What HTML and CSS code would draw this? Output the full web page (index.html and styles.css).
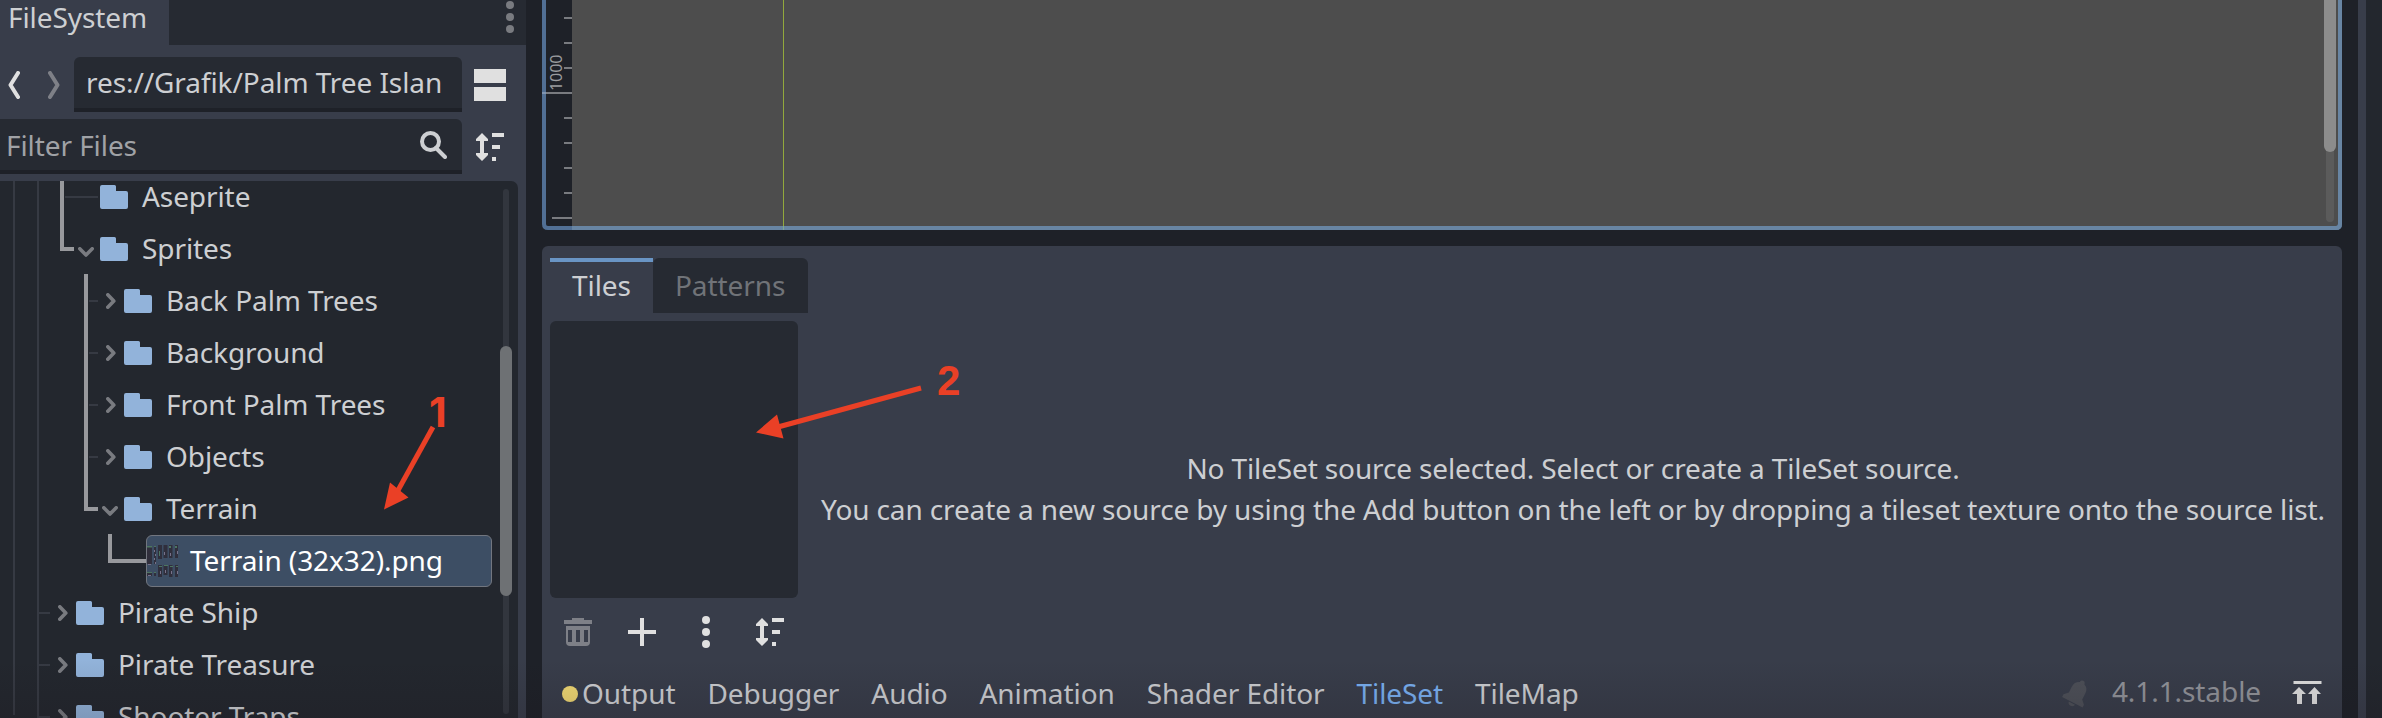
FILE: index.html
```html
<!DOCTYPE html>
<html lang="en">
<head>
<meta charset="utf-8">
<title>TileSet editor</title>
<link rel="stylesheet" href="styles.css">
</head>
<body>
<svg class="defs" width="0" height="0">
  <symbol id="folder" viewBox="0 0 28 24"><path d="M2 0H14.500Q16 0 16 1.500V6H26Q28 6 28 8V22Q28 24 26 24H2Q0 24 0 22V2Q0 0 2 0Z"/></symbol>
  <symbol id="right" viewBox="0 0 10 16"><path d="M1.800 1.800L7.800 8L1.800 14.200" fill="none" stroke="currentColor" stroke-width="3.600" stroke-linejoin="round" stroke-linecap="round"/></symbol>
  <symbol id="down" viewBox="0 0 16 10"><path d="M1.800 1.800L8 8L14.200 1.800" fill="none" stroke="currentColor" stroke-width="3.600" stroke-linejoin="round" stroke-linecap="round"/></symbol>
  <symbol id="sort" viewBox="0 0 28 28"><path d="M6 0L12 6V8H8V20H12V22L6 28L0 22V20H4V8H0V6ZM16 0H28V4H16ZM16 12H24V16H16ZM16 24H20V28H16Z"/></symbol>
  <symbol id="dots" viewBox="0 0 8 32"><circle cx="4" cy="4" r="4"/><circle cx="4" cy="16" r="4"/><circle cx="4" cy="28" r="4"/></symbol>
</svg>
<main class="editor">
  <aside class="dock">
    <header class="dock-tabs">
      <div class="dock-tab">FileSystem</div>
      <svg class="dock-menu" width="8" height="32"><use href="#dots"/></svg>
    </header>
    <div class="dock-row path-row">
      <svg class="nav" width="12" height="28" viewBox="0 0 12 28"><path d="M10 2L2.500 14L10 26"/></svg>
      <svg class="nav disabled" width="12" height="28" viewBox="0 0 12 28"><path d="M2 2L9.500 14L2 26"/></svg>
      <div class="field path">res://Grafik/Palm Tree Islan</div>
      <svg class="icon" width="32" height="32"><path d="M0 0H32V14H0ZM0 18H32V32H0Z"/></svg>
    </div>
    <div class="dock-row filter-row">
      <div class="field filter"><span>Filter Files</span>
        <svg width="27" height="28" viewBox="0 0 27 28"><g fill="none" stroke="#cdcfd2" stroke-width="4"><circle cx="10.500" cy="10.500" r="8.500"/><path d="M16 17L25 26" stroke-linecap="round"/></g></svg>
      </div>
      <svg class="icon" width="28" height="28"><use href="#sort"/></svg>
    </div>
    <section class="tree">
      <div class="rows">
        <div class="row l2"><i></i><svg class="folder"><use href="#folder"/></svg><span>Aseprite</span></div>
        <div class="row l2"><svg class="chev down"><use href="#down"/></svg><svg class="folder"><use href="#folder"/></svg><span>Sprites</span></div>
        <div class="row l3"><svg class="chev right"><use href="#right"/></svg><svg class="folder"><use href="#folder"/></svg><span>Back Palm Trees</span></div>
        <div class="row l3"><svg class="chev right"><use href="#right"/></svg><svg class="folder"><use href="#folder"/></svg><span>Background</span></div>
        <div class="row l3"><svg class="chev right"><use href="#right"/></svg><svg class="folder"><use href="#folder"/></svg><span>Front Palm Trees</span></div>
        <div class="row l3"><svg class="chev right"><use href="#right"/></svg><svg class="folder"><use href="#folder"/></svg><span>Objects</span></div>
        <div class="row l3"><svg class="chev down"><use href="#down"/></svg><svg class="folder"><use href="#folder"/></svg><span>Terrain</span></div>
        <div class="row selected">
          <svg class="thumb" width="31" height="32" viewBox="0 0 31 32">
            <path fill="#302f3c" d="M0 1h5v18H0zM7 1h2v18H7zM11 0h4v14h-4zM16.500 0h4v13h-4zM22 0h3.500v13H22zM28 0h3v13h-3zM0 27h5v4H0zM7 27h2v4H7zM11 20h4v12h-4zM16.500 20h4v10h-4zM22 20h3.500v12H22zM28 20h3v12h-3z"/>
            <path fill="#4d7560" d="M0 1h5v1.500H0zM7 1h2v1H7zM12 6h1v5h-1zM22 1h2v2h-2zM28 1h2v2h-2zM0 27h5v1H0zM7 27h2v1H7zM12 21h3v1h-3zM17 20h4v1h-4zM23 21h3v1h-3zM29 21h2v1h-2z"/>
            <path fill="#77718a" d="M1 19h3v1H1zM7 5h1v2H7zM8 9h1v2H8zM7 13h1v2H7zM8 17h1v2H8zM17 7h1v3h-1zM23 8h1v3h-1zM30 6h1v3h-1zM1 30h3v1H1zM13 26h1v3h-1zM18 25h1v3h-1zM24 26h1v3h-1zM30 26h1v3h-1z"/>
          </svg><span>Terrain (32x32).png</span></div>
        <div class="row l1"><svg class="chev right"><use href="#right"/></svg><svg class="folder"><use href="#folder"/></svg><span>Pirate Ship</span></div>
        <div class="row l1"><svg class="chev right"><use href="#right"/></svg><svg class="folder"><use href="#folder"/></svg><span>Pirate Treasure</span></div>
        <div class="row l1"><svg class="chev right"><use href="#right"/></svg><svg class="folder"><use href="#folder"/></svg><span>Shooter Traps</span></div>
      </div>
      <svg class="guides" width="160" height="537">
        <path fill="#363a43" d="M13 0h2v534h-2zM37 0h2v537h-2zM65 15h33v2H65zM89 119h9v2h-9zM89 171h9v2h-9zM89 223h9v2h-9zM89 275h9v2h-9zM39 431h11v2H39zM39 483h11v2H39zM39 535h11v2H39z"/>
        <path fill="#98999d" d="M60 0h4v66h10v4H60zM84 93h4v233h10v4H84zM108 353h4v25h34v4h-38z"/>
      </svg>
      <div class="scroll"><b></b></div>
    </section>
  </aside>

  <section class="center">
    <div class="viewport">
      <div class="ruler">
        <span class="mark">1000</span>
        <svg width="30" height="230"><path fill="#797b80" d="M22 17h8v2h-8zM22 42h8v2h-8zM22 67h8v2h-8zM4 92h26v2H4zM22 117h8v2h-8zM22 142h8v2h-8zM22 167h8v2h-8zM22 192h8v2h-8zM10 217h20v2H10z"/></svg>
      </div>
      <div class="canvas"><div class="guide"></div><div class="vscroll"><b></b></div></div>
      <svg class="focus" width="1800" height="230"><path d="M2 -4V224Q2 228 6 228H1794Q1798 228 1798 224V-4" fill="none" stroke="#516f94" stroke-width="4"/><path d="M30 228H1794Q1798 228 1798 224V-4" fill="none" stroke="#6885a3" stroke-width="4"/><path d="M0 92h4v2H0z" fill="#8095b2"/><path d="M241 226h1v4h-1z" fill="#80ab90"/></svg>
    </div>
    <div class="panel">
      <div class="tabs"><div class="tab active">Tiles</div><div class="tab">Patterns</div></div>
      <div class="work">
        <div class="sources">
          <div class="list"></div>
          <div class="tools">
            <svg class="trash" width="28" height="28"><path fill-rule="evenodd" d="M8 0H20V2H28V6H0V2H8ZM2 8H26V24Q26 28 22 28H6Q2 28 2 24ZM4 12V24H8V12ZM12 12V24H16V12ZM20 12V24H24V12Z"/></svg>
            <svg width="28" height="28"><path d="M12 0H16V12H28V16H16V28H12V16H0V12H12Z"/></svg>
            <svg class="more" width="8" height="32"><use href="#dots"/></svg>
            <svg width="28" height="28"><use href="#sort"/></svg>
          </div>
        </div>
        <div class="message"><p>No TileSet source selected. Select or create a TileSet source.</p><p>You can create a new source by using the Add button on the left or by dropping a tileset texture onto the source list.</p></div>
      </div>
      <footer class="bottom">
        <i class="dot"></i><span>Output</span><span>Debugger</span><span>Audio</span><span>Animation</span><span>Shader Editor</span><span class="on">TileSet</span><span>TileMap</span>
        <svg class="bell" width="28" height="28" viewBox="0 0 28 28"><g transform="rotate(27 14 14)"><path d="M12 1.500A2.500 2.500 0 0 1 17 1.500Q22 3.500 22 9V16L26 20V23H3V20L7 16V9Q7 3.500 12 1.500Z"/><path d="M11 24H18Q17.500 27 14.500 27T11 24Z"/></g></svg>
        <span class="version">4.1.1.stable</span>
        <svg class="expand" width="30" height="24"><path d="M1.500 0H29.500V3H1.500ZM7 6L14 13H10V23H5V13H0ZM22.500 6L29 13H25V23H20V13H16Z"/></svg>
      </footer>
    </div>
  </section>
  <aside class="right-dock"></aside>
  <svg class="notes" width="2382" height="718">
    <g stroke="#ea4026" stroke-width="5"><path d="M433 427L396 494"/><path d="M921 388L778 427"/></g>
    <path fill="#ea4026" d="M384 509.500L390 482.500L408.500 497.500ZM756 432.500L777 414.500L783.500 438.500Z"/>
    <text class="one" x="429" y="427">1</text><text x="937" y="395">2</text>
  </svg>
</main>
</body>
</html>
```
FILE: styles.css
```css
* { box-sizing: border-box; }
body { margin: 0; overflow: hidden; background: #1e2128; color: #cdcfd2; font: 28px/38px "Noto Sans", sans-serif; letter-spacing: -.08px; }
svg { display: block; flex: none; fill: #e0e0e0; }
p { margin: 0; }
.defs { position: absolute; }
.editor { position: relative; display: flex; width: 2382px; height: 718px; overflow: hidden; }
.editor::after { content: ""; position: absolute; inset: 660px 0 0; background: linear-gradient(transparent, rgba(25, 18, 25, .16)); }

.dock { display: flex; flex-direction: column; width: 526px; background: #383d4a; }
.dock-tabs { display: flex; justify-content: space-between; height: 45px; background: #262a32; }
.dock-tab { width: 169px; padding-left: 8px; line-height: 35px; background: #383d4a; }
.dock-menu { margin: 1px 12px 0 0; fill: #797b80; }
.dock-row { display: flex; align-items: center; }
.path-row { margin-top: 12px; padding-left: 8px; }
.filter-row { margin-top: 7px; }
.nav { fill: none; stroke: #e0e0e0; stroke-width: 4; stroke-linecap: round; stroke-linejoin: round; }
.nav.disabled { margin-left: 28px; stroke: #7e8087; }
.field { height: 55px; background: #262a32; border-bottom: 4px solid #1e2128; border-radius: 6px 6px 0 0; white-space: nowrap; overflow: hidden; line-height: 50px; }
.path { width: 388px; margin-left: 14px; padding-left: 12px; }
.path-row .icon { margin-left: 12px; }
.filter { display: flex; align-items: center; justify-content: space-between; width: 462px; padding: 0 15px 0 6px; border-top-left-radius: 0; color: #a0a2a6; }
.filter-row .icon { margin-left: 14px; }

.tree { position: relative; display: flex; width: 518px; height: 537px; margin-top: 7px; background: #23272e; border-top-right-radius: 7px; overflow: hidden; }
.rows { width: 492px; margin-top: -10px; }
.row { display: flex; align-items: center; height: 52px; white-space: nowrap; }
.row i { width: 22px; }
.row span { margin-top: -2px; line-height: 32px; }
.l1 { padding-left: 54px; }
.l2 { padding-left: 78px; }
.l3 { padding-left: 102px; }
.chev { color: #797b80; }
.chev.right { width: 10px; height: 16px; margin: 0 8px 0 4px; }
.chev.down { width: 16px; height: 10px; margin: 5px 6px 0 0; }
.l3 .chev.down { margin-top: 3px; }
.folder { width: 28px; height: 24px; margin-right: 14px; fill: #92b3da; }
.selected { margin-left: 146px; background: #3d4e64; border: 1px solid #72767f; border-radius: 6px; color: #fff; }
.thumb { margin-right: 12px; }
.guides { position: absolute; left: 0; top: 0; }
.scroll { width: 6px; height: 525px; margin: 8px 0 0 11px; background: #32363e; border-radius: 3px; }
.scroll b { display: block; width: 12px; height: 250px; margin: 157px 0 0 -3px; background: #6e7174; border-radius: 6px; }

.center { width: 1800px; margin-left: 16px; }
.viewport { position: relative; display: flex; height: 230px; }
.ruler { position: relative; width: 30px; background: #1e2128; border-bottom-left-radius: 6px; }
.mark { position: absolute; left: 4px; top: 53px; height: 38px; width: 20px; writing-mode: vertical-rl; transform: rotate(180deg); font-size: 16px; line-height: 20px; color: #999b9e; }
.canvas { display: flex; justify-content: space-between; width: 1770px; background: #4d4d4d; border-bottom-right-radius: 6px; }
.guide { width: 1px; margin-left: 211px; background: #92a83c; }
.vscroll { width: 8px; height: 222px; margin-right: 8px; background: #5b5b5b; border-radius: 4px; }
.vscroll b { display: block; width: 12px; height: 152px; margin-left: -2px; background: #8c8c8c; border-radius: 0 0 6px 6px; }
.focus { position: absolute; left: 0; top: 0; }

.panel { display: flex; flex-direction: column; height: 472px; margin-top: 16px; padding: 12px 8px 0; background: #383d4a; border-radius: 6px 6px 0 0; }
.tabs { display: flex; }
.tab { width: 155px; height: 55px; padding-left: 22px; line-height: 55px; background: #262a32; color: #707378; border-radius: 6px 6px 0 0; }
.tab.active { width: 103px; border-top: 4px solid #6995c5; border-radius: 0; line-height: 47px; background: #383d4a; color: #cdcfd2; }
.work { display: flex; height: 340px; margin-top: 8px; }
.sources { width: 248px; }
.list { height: 277px; background: #262a32; border-radius: 6px; }
.tools { display: flex; align-items: center; height: 32px; margin: 18px 14px 0; }
.tools svg + svg { margin-left: 36px; }
.tools .more { margin: 0 10px 0 46px !important; }
.trash { fill: #7e8087; }
.message { flex: 1; padding: 127px 8px 0 22px; text-align: center; white-space: nowrap; line-height: 41px; letter-spacing: -.13px; }
.bottom { display: flex; align-items: center; height: 57px; padding: 6px 12px 0; }
.bottom span + span { margin-left: 32px; }
.dot { width: 16px; height: 16px; margin: 3px 4px 0 0; border-radius: 50%; background: #f0d873; }
.on { color: #7ab1f3; }
.bell { margin: 3px 0 0 auto; fill: #4d5058; }
.bottom .version { margin: -3px 31px 0 22px; color: #92949a; }

.right-dock { flex: 1; margin-left: 16px; background: #23272e; border-left: 8px solid #383d4a; }
.notes { position: absolute; left: 0; top: 0; fill: #ea4026; font: bold 42px "Liberation Sans", sans-serif; }
.one { font-family: Inter, sans-serif; font-size: 41px; }
```
